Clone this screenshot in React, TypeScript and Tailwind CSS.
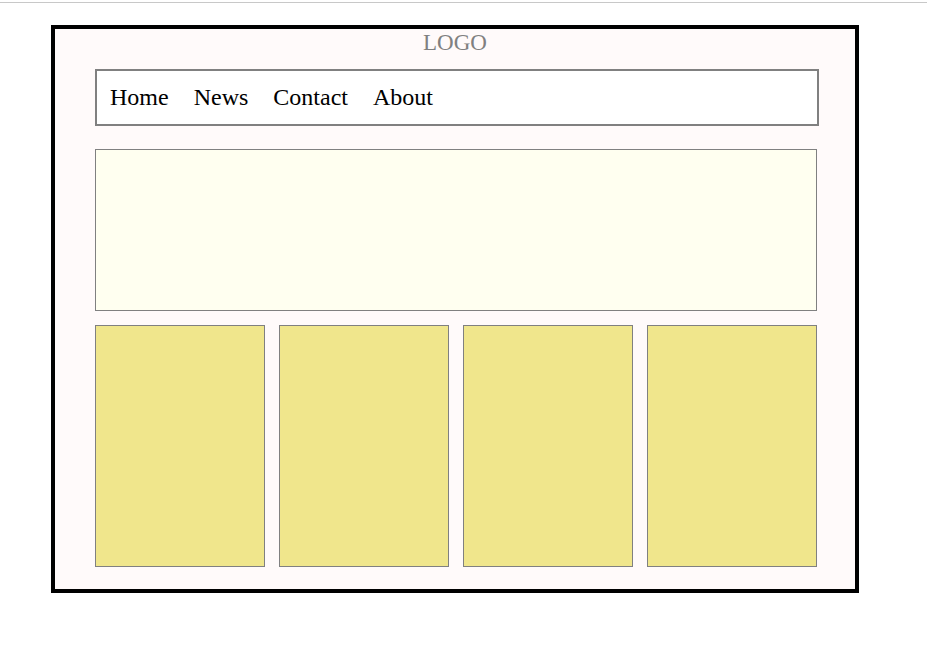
export default function App() {
	const cards = [1, 2, 3, 4];

	return <div className="w-full min-h-screen bg-white font-['Liberation_Serif',serif]">
		<div className="pt-[2px]">
			<div className="h-px bg-[#c8c8c8]" />
		</div>

		<div className="ml-[51px] mt-[22px] w-[808px] h-[568px] border-4 border-black bg-[#fffafa]">
			<div className="h-[40px] text-center text-[23px] leading-[28px] text-[#808080]">LOGO</div>

			<div className="ml-[40px] w-[724px] h-[57px] border-2 border-[#808080] bg-white flex items-center gap-[25px] pl-[13px] pb-[2px] text-[24px] text-black">
				<span>Home</span>
				<span>News</span>
				<span>Contact</span>
				<span>About</span>
			</div>

			<div className="ml-[40px] mt-[23px] w-[722px] h-[162px] border border-[#808080] bg-[#fffff0]" />

			<div className="ml-[40px] mt-[14px] w-[722px] grid grid-cols-4 gap-[14px]">
				{cards.map(c => <div key={c} className="h-[242px] border border-[#808080] bg-[#f0e68c]" />)}
			</div>
		</div>
	</div>
}
